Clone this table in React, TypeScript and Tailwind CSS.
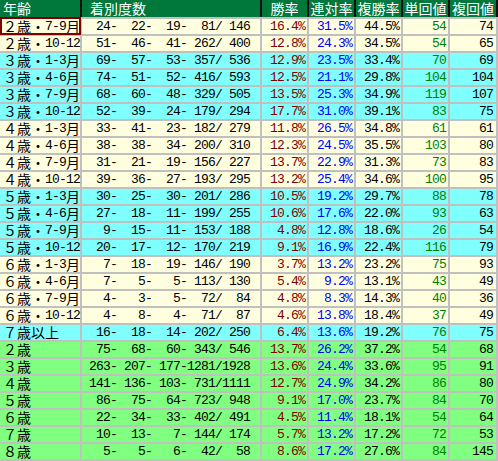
import React from "react";

type Bg = "y" | "c" | "g";
type Row = [string, number[], string, string, string, number, number, Bg];

const rows: Row[] = [
  ["２歳・7-9月", [24, 22, 19, 81, 146], "16.4%", "31.5%", "44.5%", 54, 74, "y"],
  ["２歳・10-12", [51, 46, 41, 262, 400], "12.8%", "24.3%", "34.5%", 54, 65, "y"],
  ["３歳・1-3月", [69, 57, 53, 357, 536], "12.9%", "23.5%", "33.4%", 70, 69, "c"],
  ["３歳・4-6月", [74, 51, 52, 416, 593], "12.5%", "21.1%", "29.8%", 104, 104, "c"],
  ["３歳・7-9月", [68, 60, 48, 329, 505], "13.5%", "25.3%", "34.9%", 119, 107, "c"],
  ["３歳・10-12", [52, 39, 24, 179, 294], "17.7%", "31.0%", "39.1%", 83, 75, "c"],
  ["４歳・1-3月", [33, 41, 23, 182, 279], "11.8%", "26.5%", "34.8%", 61, 61, "y"],
  ["４歳・4-6月", [38, 38, 34, 200, 310], "12.3%", "24.5%", "35.5%", 103, 80, "y"],
  ["４歳・7-9月", [31, 21, 19, 156, 227], "13.7%", "22.9%", "31.3%", 73, 83, "y"],
  ["４歳・10-12", [39, 36, 27, 193, 295], "13.2%", "25.4%", "34.6%", 100, 95, "y"],
  ["５歳・1-3月", [30, 25, 30, 201, 286], "10.5%", "19.2%", "29.7%", 88, 78, "c"],
  ["５歳・4-6月", [27, 18, 11, 199, 255], "10.6%", "17.6%", "22.0%", 93, 63, "c"],
  ["５歳・7-9月", [9, 15, 11, 153, 188], "4.8%", "12.8%", "18.6%", 26, 54, "c"],
  ["５歳・10-12", [20, 17, 12, 170, 219], "9.1%", "16.9%", "22.4%", 116, 79, "c"],
  ["６歳・1-3月", [7, 18, 19, 146, 190], "3.7%", "13.2%", "23.2%", 75, 93, "y"],
  ["６歳・4-6月", [7, 5, 5, 113, 130], "5.4%", "9.2%", "13.1%", 43, 49, "y"],
  ["６歳・7-9月", [4, 3, 5, 72, 84], "4.8%", "8.3%", "14.3%", 40, 36, "y"],
  ["６歳・10-12", [4, 8, 4, 71, 87], "4.6%", "13.8%", "18.4%", 37, 49, "y"],
  ["７歳以上", [16, 18, 14, 202, 250], "6.4%", "13.6%", "19.2%", 76, 75, "c"],
  ["２歳", [75, 68, 60, 343, 546], "13.7%", "26.2%", "37.2%", 54, 68, "g"],
  ["３歳", [263, 207, 177, 1281, 1928], "13.6%", "24.4%", "33.6%", 95, 91, "g"],
  ["４歳", [141, 136, 103, 731, 1111], "12.7%", "24.9%", "34.2%", 86, 80, "g"],
  ["５歳", [86, 75, 64, 723, 948], "9.1%", "17.0%", "23.7%", 84, 70, "g"],
  ["６歳", [22, 34, 33, 402, 491], "4.5%", "11.4%", "18.1%", 54, 64, "g"],
  ["７歳", [10, 13, 7, 144, 174], "5.7%", "13.2%", "17.2%", 72, 53, "g"],
  ["８歳", [5, 5, 6, 42, 58], "8.6%", "17.2%", "27.6%", 84, 145, "g"],
];

const bgClass: Record<Bg, string> = {
  y: "bg-[#ffffe0]",
  c: "bg-[#80ffff]",
  g: "bg-[#80ff80]",
};

const CJK = "font-['Noto_Sans_CJK_JP',sans-serif] text-[14px]";
const MONO = "font-['Liberation_Mono',monospace] text-[13px] tracking-[-0.8px]";

function Mixed({ text }: { text: string }) {
  const parts = text.match(/[\x00-\x7f]+|[^\x00-\x7f]+/g) || [];
  return (
    <>
      {parts.map((p, i) =>
        /^[\x00-\x7f]+$/.test(p) ? (
          <span key={i} className={MONO}>
            {p}
          </span>
        ) : (
          <span key={i} className={CJK}>
            {p}
          </span>
        )
      )}
    </>
  );
}

function fmt(n: number[]) {
  const p = (x: number) => String(x).padStart(4, " ");
  return `${p(n[0])}-${p(n[1])}-${p(n[2])}-${p(n[3])}/${p(n[4])}`;
}

const GRID =
  "grid grid-cols-[80px_178px_45px_45px_45px_45px_46px] gap-x-[2px] pr-[2px]";

export default function App() {
  return (
    <div className="relative w-[498px] h-[461px] bg-white overflow-hidden">
      <div className={`${GRID} bg-[#101010] h-[17px]`}>
        {[
          ["年齢", "justify-start pl-[3px]"],
          ["着別度数", "justify-start pl-[8px]"],
          ["勝率", "justify-center"],
          ["連対率", "justify-center"],
          ["複勝率", "justify-center"],
          ["単回値", "justify-center"],
          ["複回値", "justify-center"],
        ].map(([t, c], i) => (
          <div
            key={i}
            className={`bg-[#00783c] text-white flex items-center leading-[17px] whitespace-nowrap ${CJK} ${c}`}
          >
            {t}
          </div>
        ))}
      </div>
      <div className="flex flex-col bg-[#c0c0c0] pb-[2px]">
        {rows.map((r, i) => (
          <div key={i} className={`${GRID} pt-[2px] h-[17px]`}>
            <div
              className={`${bgClass[r[7]]} pl-[3px] flex items-center leading-[15px] whitespace-pre text-black`}
            >
              <Mixed text={r[0]} />
            </div>
            <div
              className={`${bgClass[r[7]]} pr-[10px] flex items-center justify-end leading-[15px] whitespace-pre text-black ${MONO}`}
            >
              {fmt(r[1])}
            </div>
            <div
              className={`${bgClass[r[7]]} pr-[2px] flex items-center justify-end leading-[15px] whitespace-pre text-[#800000] ${MONO}`}
            >
              {r[2]}
            </div>
            <div
              className={`${bgClass[r[7]]} pr-[2px] flex items-center justify-end leading-[15px] whitespace-pre text-[#0000ff] ${MONO}`}
            >
              {r[3]}
            </div>
            <div
              className={`${bgClass[r[7]]} pr-[2px] flex items-center justify-end leading-[15px] whitespace-pre text-black ${MONO}`}
            >
              {r[4]}
            </div>
            <div
              className={`${bgClass[r[7]]} pr-[2px] flex items-center justify-end leading-[15px] whitespace-pre text-[#008000] ${MONO}`}
            >
              {r[5]}
            </div>
            <div
              className={`${bgClass[r[7]]} pr-[3px] flex items-center justify-end leading-[15px] whitespace-pre text-black ${MONO}`}
            >
              {r[6]}
            </div>
          </div>
        ))}
      </div>
      <div className="absolute left-0 top-[17px] w-[81px] h-[18px] border-2 border-[#800000] pointer-events-none" />
    </div>
  );
}
